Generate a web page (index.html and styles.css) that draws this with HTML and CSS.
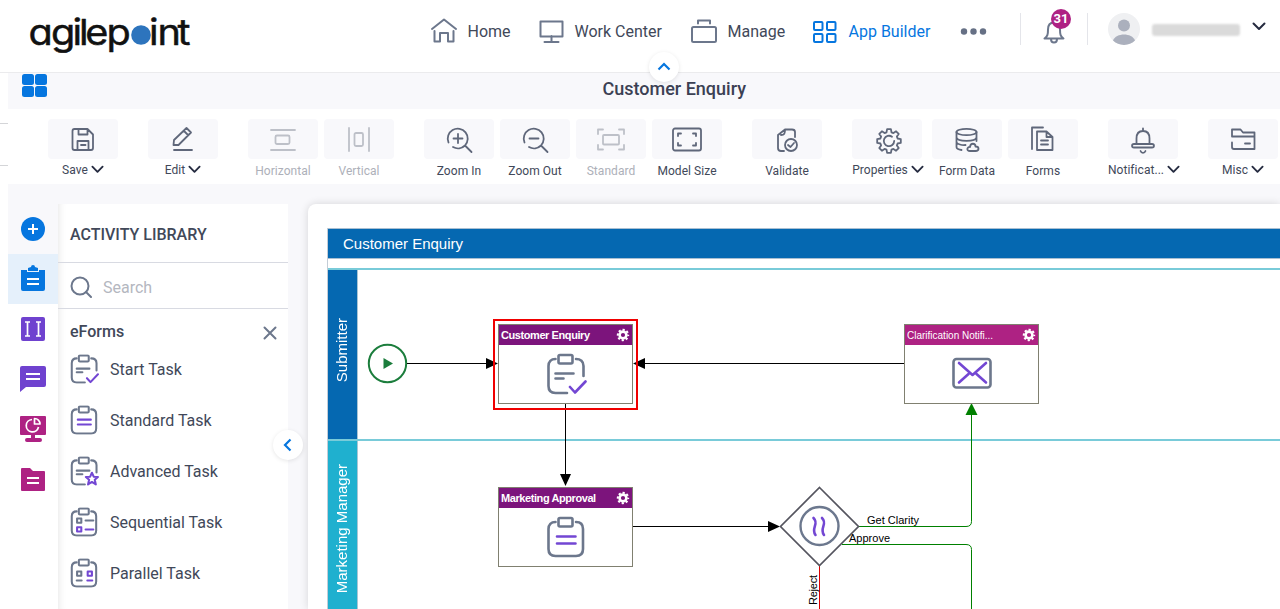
FILE: index.html
```html
<!DOCTYPE html>
<html lang="en">
<head>
  <meta charset="UTF-8" />
  <meta name="viewport" content="width=device-width, initial-scale=1.0" />
  <title>Customer Enquiry - App Builder</title>
  <link rel="stylesheet" href="styles.css">
</head>
<body>
  <svg class="defs">
    <symbol id="chevron" viewBox="0 0 14 9"><path d="M1.5 1.5L7 7l5.5-5.5"/></symbol>
    <symbol id="clip" viewBox="0 0 41 42">
      <rect x="12.500" y="2" width="14" height="8.500" rx="1.500"/>
      <path d="M9.500 6C5 6 2.500 8.500 2.500 13v20c0 4.500 2.500 7 7 7h20.500c4.500 0 7-2.500 7-7V13c0-4.500-2.500-7-7-7"/>
    </symbol>
    <symbol id="clip-open" viewBox="0 0 41 42">
      <rect x="12.500" y="2" width="14" height="8.500" rx="1.500"/>
      <path d="M9.500 6C5 6 2.500 8.500 2.500 13v20c0 4.500 2.500 7 7 7H21M30 6c4.500 0 7.500 2.500 7.500 7v10M9.500 20.500h18M9.500 25.500h8"/>
    </symbol>
    <symbol id="task-start" viewBox="0 0 41 42">
      <use href="#clip-open" width="41" height="42"/>
      <path class="accent" d="M24 34l5 5.500 10.500-11"/>
    </symbol>
    <symbol id="task-standard" viewBox="0 0 41 42">
      <use href="#clip" width="41" height="42"/>
      <path class="accent" d="M11 20.500h18.500M11 27.500h18.500"/>
    </symbol>
    <symbol id="cog" viewBox="0 0 14 14">
      <circle cx="7" cy="7" r="3.400" stroke-width="2.600"/>
      <circle cx="7" cy="7" r="5.200" stroke-width="2" stroke-dasharray="2.200 1.884" stroke-dashoffset="1.100"/>
    </symbol>
  </svg>

  <header class="header">
    <svg class="logo" viewBox="0 0 164 48">
      <g transform="scale(1.1 1)">
        <text y="34" x="0.500 21 40.500 46.400 52 71.400">agilep</text>
        <text y="34" x="110 117.700 135.800">int</text>
      </g>
      <circle cx="113" cy="24" r="9.800"/>
    </svg>
    <nav class="nav">
      <a class="nav-item"><svg width="26" height="26"><path d="M1 12L13 2.500 25 12M3.500 14v10.500H9V16h8v8.500h5.500V14"/></svg>Home</a>
      <a class="nav-item"><svg width="25" height="26"><path d="M1.500 4.500h22v15h-22zM12.500 19v5.500M5.500 25h14"/></svg>Work Center</a>
      <a class="nav-item"><svg width="26" height="26"><rect x="1" y="10" width="24" height="15" rx="1.500"/><path d="M7 6.500V3.500h12v3"/></svg>Manage</a>
      <a class="nav-item active"><svg width="25" height="26"><rect x="1" y="5" width="8.500" height="8" rx="1"/><rect x="14" y="5" width="8.500" height="8" rx="1"/><rect x="1" y="17" width="8.500" height="8" rx="1"/><rect x="14" y="17" width="8.500" height="8" rx="1"/></svg>App Builder</a>
      <svg class="dots" width="28" height="26"><circle cx="4" cy="13.500" r="3.200"/><circle cx="13.500" cy="13.500" r="3.200"/><circle cx="23" cy="13.500" r="3.200"/></svg>
    </nav>
    <div class="bell">
      <svg width="22" height="26"><path d="M1.500 19.500c3-2 3.500-4 3.500-9 0-4 2-7 6-7s6 3 6 7c0 5 .5 7 3.500 9zM8 20c0 2 1.200 3.500 3 3.500s3-1.500 3-3.500"/></svg>
      <span class="badge">31</span>
    </div>
    <div class="user">
      <svg class="avatar" width="32" height="32"><circle cx="16" cy="16" r="16" fill="#eff0f2"/><circle cx="16" cy="12.500" r="6" fill="#abb0bd"/><path d="M5 27.500c3-8 19-8 22 0A16 16 0 0 1 5 27.500z" fill="#abb0bd"/></svg>
      <span class="user-name"></span>
      <svg class="chevron"><use href="#chevron"/></svg>
    </div>
    <span class="collapse"><svg width="14" height="9"><path d="M1.500 7.500L7 2l5.500 5.500"/></svg></span>
  </header>

  <div class="app">
    <div class="title-bar">
      <div class="app-menu"><i></i><i></i><i></i><i></i></div>
      <h1>Customer Enquiry</h1>
    </div>

    <div class="toolbar">
      <div class="group">
        <div class="tool"><div class="tile"><svg><path d="M6.500 4h13L25 9.500V23c0 1.500-.5 2-2 2H6.500c-1.500 0-2-.5-2-2V6c0-1.500.5-2 2-2zM10.500 4v5.500h9V4M9.500 25v-9h11v9M13 20h4.500"/></svg></div><span class="drop">Save <svg class="chevron"><use href="#chevron"/></svg></span></div>
      </div>
      <div class="group">
        <div class="tool"><div class="tile"><svg><path d="M5.500 20l.5-5L18.500 3l4.500 4.500L10.500 20zM16 6l4 4M6 25h18"/></svg></div><span class="drop">Edit <svg class="chevron"><use href="#chevron"/></svg></span></div>
      </div>
      <div class="group">
        <div class="tool off"><div class="tile"><svg><path d="M3 5h24M3 25h24"/><rect x="7.500" y="10.500" width="14" height="8.500" rx="1.500"/></svg></div><span>Horizontal</span></div>
        <div class="tool off"><div class="tile"><svg><path d="M5 3v23M25 3v23"/><rect x="10.500" y="8" width="8.500" height="13" rx="1.500"/></svg></div><span>Vertical</span></div>
      </div>
      <div class="group">
        <div class="tool"><div class="tile"><svg><path d="M4.500 17.500A10 10 0 1 1 21 20.500L27.500 27M21 20.500A10 10 0 0 1 9 22M14 9v9M9.500 13.500h9"/></svg></div><span>Zoom In</span></div>
        <div class="tool"><div class="tile"><svg><path d="M4.500 17.500A10 10 0 1 1 21 20.500L27.500 27M21 20.500A10 10 0 0 1 9 22M9.500 13.500h9"/></svg></div><span>Zoom Out</span></div>
        <div class="tool off"><div class="tile"><svg><path d="M2 9V4.500h5M23 4.500h5V9M28 20v4.500h-5M7 24.500H2V20"/><rect x="7" y="10" width="16" height="9.500" rx="1"/></svg></div><span>Standard</span></div>
        <div class="tool"><div class="tile"><svg><rect x="1" y="3.500" width="28" height="22" rx="2"/><path d="M6 11V8.500h3M21 8.500h3V11M24 18v2.500h-3M9 20.500H6V18"/></svg></div><span>Model Size</span></div>
      </div>
      <div class="group">
        <div class="tool"><div class="tile"><svg><path d="M23 12V7c0-2-1-2.500-3-2.500h-7L6 10v13c0 2 1 3 3 3h3M13 4.500c0 4-.5 5.500-4 5.500"/><circle cx="19" cy="20" r="6"/><path d="M16 20l2.500 2 3.500-4"/></svg></div><span>Validate</span></div>
      </div>
      <div class="group data">
        <div class="tool"><div class="tile"><svg class="gear"><path d="M13.100 3.200L16.900 3.200 17.500 6.400 19.400 7.100 22.100 5.300 24.700 7.900 22.900 10.600 23.600 12.500 26.800 13.100 26.800 16.900 23.600 17.500 22.900 19.400 24.700 22.100 22.100 24.700 19.400 22.900 17.500 23.600 16.900 26.800 13.100 26.800 12.500 23.600 10.600 22.900 7.900 24.700 5.300 22.100 7.100 19.400 6.400 17.500 3.200 16.900 3.200 13.100 6.400 12.500 7.100 10.600 5.300 7.900 7.900 5.300 10.600 7.100 12.500 6.400z"/><path d="M18 10.700a5.200 5.200 0 1 0 2.200 4.300"/></svg></div><span class="drop">Properties <svg class="chevron"><use href="#chevron"/></svg></span></div>
        <div class="tool"><div class="tile"><svg><ellipse cx="14.500" cy="7" rx="10" ry="3.200"/><path d="M4.500 7v15c0 1.500 1.500 2.500 5 3M24.500 7v9M4.500 12.500c1 4.500 19 4.500 20 0M4.500 17.500c1 1.500 5 3 9 2.500M18 26c-4 0-3-4.500 0-4 .5-4.500 5.500-4 5.500-.5 4 0 4 4.500 0 4.500z"/></svg></div><span>Form Data</span></div>
        <div class="tool"><div class="tile"><svg><path d="M4 24V2.500h11M9 6.500h9.500l6 5.500v13H9zM18.500 6.500V12h6M13 15.500h7M13 19.500h7"/></svg></div><span>Forms</span></div>
      </div>
      <div class="group">
        <div class="tool"><div class="tile"><svg><path d="M15 3.500V6M8.500 19v-5.500c0-5 2.500-7.500 6.500-7.500s6.500 2.500 6.500 7.500V19M6 19h18c2.600 0 2.600 3.500 0 3.500H6c-2.600 0-2.600-3.500 0-3.500zM12.500 26c1 2.500 4 2.500 5 0"/></svg></div><span class="drop wide">Notificat... <svg class="chevron"><use href="#chevron"/></svg></span></div>
      </div>
      <div class="group">
        <div class="tool"><div class="tile"><svg><path d="M4 11.500V4.500h8.500l2.500 3h11.500v4M4 11.500h22.500V24H6c-1.500 0-2-.5-2-2v-4.500M17 18.500h5"/></svg></div><span class="drop">Misc <svg class="chevron"><use href="#chevron"/></svg></span></div>
      </div>
    </div>

    <div class="workspace">
      <div class="rail">
        <div class="rail-item"><svg><circle cx="15" cy="15" r="12" fill="#0676df"/><path class="w" d="M15 10v10M10 15h10"/></svg></div>
        <div class="rail-item selected"><svg><path fill="#0676df" d="M3 6h6v2h12V6h6v19a2 2 0 0 1-2 2H5a2 2 0 0 1-2-2zM10 7V4l3-1a2 2 0 0 1 4 0l3 1v3z"/><path class="w" d="M9 15h12M9 20h12"/></svg></div>
        <div class="rail-item"><svg><rect x="3" y="3" width="24" height="24" rx="2" fill="#6f42cf"/><path class="w thin" d="M9.500 8v14M20.500 8v14M7 8h5M18 8h5M7 22h5M18 22h5"/></svg></div>
        <div class="rail-item"><svg><path fill="#6f42cf" d="M4 2h22a2 2 0 0 1 2 2v17a2 2 0 0 1-2 2H8l-6 5V4a2 2 0 0 1 2-2z"/><path class="w" d="M8 10h14M8 15h14"/></svg></div>
        <div class="rail-item"><svg><path fill="#ae2283" d="M3 2h24a1 1 0 0 1 1 1v17a1 1 0 0 1-1 1H17v3h5a2 2 0 0 1 0 4H9a2 2 0 0 1 0-4h4v-3H3a1 1 0 0 1-1-1V3a1 1 0 0 1 1-1z"/><path class="w thin" d="M14 5.500a6.200 6.200 0 1 0 6.500 7.500M16.500 4.500V10H22a5.500 5.500 0 0 0-5.500-5.500z"/></svg></div>
        <div class="rail-item"><svg><path fill="#ae2283" d="M3 5a1 1 0 0 1 1-1h8l3 3h11a1 1 0 0 1 1 1v18a1 1 0 0 1-1 1H4a1 1 0 0 1-1-1z"/><path class="w" d="M9 14h12M9 19h12"/></svg></div>
      </div>

      <div class="library">
        <h2>ACTIVITY LIBRARY</h2>
        <div class="search"><svg width="22" height="22"><circle cx="10" cy="10" r="8.500"/><path d="M16 16l5 5"/></svg>Search</div>
        <div class="section">eForms <svg width="14" height="14"><path d="M1.500 1.500l11 11M12.500 1.500l-11 11"/></svg></div>
        <ul>
          <li><svg viewBox="0 0 41 42"><use href="#task-start"/></svg>Start Task</li>
          <li><svg viewBox="0 0 41 42"><use href="#task-standard"/></svg>Standard Task</li>
          <li><svg viewBox="0 0 41 42"><use href="#clip-open"/><path class="accent" d="M31 23.500l2.500 5.500 6 .5-4.500 4 1.500 6.500-5.500-3.500-5.500 3.500 1.500-6.500-4.500-4 6-.5z"/></svg>Advanced Task</li>
          <li><svg viewBox="0 0 41 42"><use href="#clip"/><path d="M10 16h6v6h-6zM22 19h11"/><path class="accent" d="M10 28.500h6v6h-6zM22 31.500h11"/></svg>Sequential Task</li>
          <li><svg viewBox="0 0 41 42"><use href="#clip"/><path d="M10 19h6v6h-6zM9.500 31.500h7"/><path class="accent" d="M25 19h6v6h-6zM24.500 31.500h7"/></svg>Parallel Task</li>
        </ul>
        <span class="collapse side"><svg width="9" height="14"><path d="M7.500 1.500L2 7l5.500 5.500"/></svg></span>
      </div>

      <div class="canvas">
        <div class="pool">
          <div class="pool-title">Customer Enquiry</div>
          <div class="lane submitter"><div class="lane-name"><span>Submitter</span></div></div>
          <div class="lane manager"><div class="lane-name"><span>Marketing Manager</span></div></div>
        </div>

        <svg class="edges" width="972" height="405">
          <circle cx="79.500" cy="159.500" r="18.700" fill="#fff" stroke="#1b7d3c" stroke-width="2"/>
          <path d="M75.500 154v11l9.500-5.500z" fill="#1b7d3c"/>
          <g stroke="#000" fill="none">
            <path d="M99 159.500h80M337 159.500h259M257.500 200v72M325 322.500h136"/>
          </g>
          <path d="M178 154v11l12-5.500zM337 154v11l-12-5.500zM252 270h11l-5.500 12zM460 317v11l12-5.500z"/>
          <g stroke="green" fill="none">
            <path d="M550 322.500h108q5.500 0 5.500-5V210M534 340.500h124q5.500 0 5.500 5V405"/>
          </g>
          <path d="M657.500 211h12l-6-12z" fill="green"/>
          <path d="M511.500 361v44" stroke="#dc0000"/>
          <path d="M511.500 283.500l39 39-39 39-39-39z" fill="#fff" stroke="#55555f" stroke-width="1.700"/>
          <circle cx="511.500" cy="322" r="19" fill="none" stroke="#6c788e" stroke-width="2.400"/>
          <path d="M505.500 314c6 6-3 10 2 17M514 314c6 6-3 10 2 17" fill="none" stroke="#7347d3" stroke-width="2.600" stroke-linecap="round"/>
          <text x="559" y="320" textLength="52">Get Clarity</text>
          <text x="541" y="338" textLength="41">Approve</text>
          <text transform="translate(509 401) rotate(-90)" textLength="30">Reject</text>
        </svg>

        <div class="highlight"></div>
        <div class="node enquiry">
          <div class="node-title">Customer Enquiry <svg><use href="#cog"/></svg></div>
          <svg class="node-icon"><use href="#task-start"/></svg>
        </div>
        <div class="node approval">
          <div class="node-title">Marketing Approval <svg><use href="#cog"/></svg></div>
          <svg class="node-icon"><use href="#task-standard"/></svg>
        </div>
        <div class="node clarification">
          <div class="node-title">Clarification Notifi... <svg><use href="#cog"/></svg></div>
          <svg class="node-icon"><rect x="1.500" y="6" width="37" height="28.500" rx="3"/><path class="accent" d="M7 10l13.500 12L34 10M7 29.500l9.500-8.500M34 29.500l-9.500-8.500"/></svg>
        </div>
      </div>
    </div>
  </div>
</body>
</html>
```
FILE: styles.css
```css
* {
  box-sizing: border-box;
}
body {
  margin: 0;
  height: 609px;
  overflow: hidden;
  font-family: Roboto, "Liberation Sans", sans-serif;
  font-size: 16px;
  color: #414859;
  background: #fff;
}
svg {
  fill: none;
  stroke: #6c778c;
  stroke-width: 2;
  stroke-linecap: round;
  stroke-linejoin: round;
  flex: none;
}
.defs {
  position: absolute;
  width: 0;
  height: 0;
}
.accent {
  stroke: #7347d3;
}

/* header */
.header {
  position: relative;
  display: flex;
  align-items: flex-start;
  height: 73px;
  border-bottom: 1px solid #ebebed;
}
.logo {
  width: 164px;
  height: 48px;
  margin: 11px 0 0 28px;
  stroke: none;
}
.logo text {
  font-family: Inter, sans-serif;
  font-size: 36px;
  font-feature-settings: "cv11";
  fill: #111;
  stroke: #111;
  stroke-width: 0.5;
}
.logo circle {
  fill: #2d74bd;
}
.nav {
  display: grid;
  grid-template-columns: 108px 152px 122px 147px 29px;
  margin: 16px 0 0 239px;
}
.nav-item {
  display: flex;
  align-items: center;
  gap: 10.5px;
  height: 31px;
}
.nav-item svg {
  margin-top: -4px;
}
.nav-item.active {
  color: #0676df;
}
.nav-item.active svg {
  stroke: #0676df;
}
.dots {
  margin-top: 2px;
  fill: #667085;
  stroke: none;
}
.bell {
  position: relative;
  height: 32px;
  width: 68px;
  margin: 13px 0 0 31px;
  padding: 6px 0 0 22px;
  border-left: 1px solid #e4e5ea;
  border-right: 1px solid #e4e5ea;
}
.badge {
  position: absolute;
  left: 30px;
  top: -4px;
  width: 20px;
  height: 20px;
  border-radius: 50%;
  background: #ae2283;
  color: #fff;
  font-size: 13px;
  font-weight: 700;
  line-height: 19px;
  text-align: center;
}
.user {
  display: flex;
  margin: 13px 0 0 20px;
}
.avatar {
  stroke: none;
}
.user-name {
  width: 88px;
  height: 12px;
  margin: 11px 12px 0 12px;
  background: #dadada;
  border-radius: 3px;
  filter: blur(1px);
}
.chevron {
  width: 14px;
  height: 9px;
  stroke: #252b40;
}
.user .chevron {
  margin: 9px 0 0;
}
.collapse {
  position: absolute;
  left: 649px;
  top: 52px;
  width: 30px;
  height: 30px;
  border-radius: 50%;
  background: #fff;
  box-shadow: 0 1px 4px rgba(0, 0, 0, 0.1);
  display: flex;
  align-items: center;
  justify-content: center;
  z-index: 2;
}
.collapse svg {
  margin-top: -2px;
  stroke: #0676df;
  stroke-width: 2.2;
  stroke-linecap: butt;
  stroke-linejoin: miter;
}

.app {
  position: relative;
  margin-left: 8px;
}
/* edges of the tab behind the page */
.app::before {
  content: "";
  position: absolute;
  left: -8px;
  top: 50px;
  width: 8px;
  height: 41px;
  border: solid #d4d5d8;
  border-width: 1px 0;
}
.title-bar {
  display: flex;
  height: 36px;
  background: #f8f8fb;
}
.app-menu {
  display: grid;
  grid-template: 10.5px 10.5px / 11.5px 11.5px;
  gap: 1.5px;
  margin: 1px 0 0 14px;
}
.app-menu i {
  background: #0676df;
  border-radius: 2.5px;
}
.title-bar h1 {
  margin: 5px 0 0 556px;
  font-size: 18px;
  font-weight: 500;
  line-height: 22px;
  color: #3b4053;
}

/* toolbar */
.toolbar {
  display: flex;
  gap: 30px;
  height: 75px;
  padding: 10px 0 0 40px;
  background: #fff;
  overflow: hidden;
}
.group {
  display: flex;
  flex: none;
  gap: 6px;
}
.group.data .tool:first-child {
  margin-right: 4px;
}
.tool {
  display: flex;
  flex-direction: column;
  align-items: center;
  width: 70px;
  font-size: 12px;
  white-space: nowrap;
}
.tile {
  display: flex;
  align-items: center;
  justify-content: center;
  width: 70px;
  height: 40px;
  margin-bottom: 4px;
  background: #f8f8fb;
  border-radius: 4px;
}
.tile svg {
  width: 30px;
  height: 30px;
  margin-top: 2px;
  stroke: #5f677a;
  stroke-width: 1.8;
}
.tile .gear {
  margin: 4px 0 0 3px;
}
.tool span {
  line-height: 16px;
  letter-spacing: 0.05px;
}
.tool .drop {
  line-height: 14px;
}
.tool .wide {
  margin-left: 2px;
}
.drop .chevron {
  width: 13px;
}
.off {
  color: #adb0b9;
}
.off .tile svg {
  stroke: #bdc0c8;
}
.group.data .drop {
  margin-left: 2px;
}

/* workspace */
.workspace {
  display: flex;
  height: 425px;
  background: #f8f8fb;
}
.rail {
  width: 50px;
  padding-top: 20px;
  background: linear-gradient(#f8f8fb 70px, #fff 70px);
}
.rail-item {
  display: flex;
  align-items: center;
  justify-content: center;
  height: 50px;
}
.rail-item.selected {
  background: #e5f0fb;
}
.rail-item svg {
  width: 30px;
  height: 30px;
  stroke: none;
}
.rail-item .w {
  stroke: #fff;
  stroke-width: 2;
  stroke-linecap: butt;
}
.rail-item .thin {
  stroke-width: 1.7;
}
.library {
  position: relative;
  width: 230px;
  margin-top: 20px;
  background: #fff;
  box-shadow: inset 8px 0 8px -8px rgba(0, 0, 0, 0.12);
}
.library h2 {
  height: 59px;
  margin: 0;
  padding: 2px 12px 0;
  border-bottom: 1px solid #d8dae2;
  font-size: 16px;
  font-weight: 500;
  line-height: 57px;
}
.search {
  display: flex;
  align-items: center;
  gap: 11px;
  height: 46px;
  padding: 3px 12px 0;
  border-bottom: 1px solid #d8dae2;
  color: #b4b7bf;
}
.section {
  display: flex;
  align-items: center;
  justify-content: space-between;
  height: 45px;
  padding: 0 11px 0 12px;
  font-weight: 500;
}
.section svg {
  margin-top: 3px;
}
.library ul {
  margin: -10px 0 0;
  padding: 0;
  list-style: none;
}
.library li {
  display: flex;
  align-items: center;
  gap: 11px;
  height: 51px;
  padding-left: 12px;
}
.library li svg {
  width: 29px;
  height: 30px;
  margin-top: -2px;
  stroke-width: 2.9;
}
.collapse.side {
  left: 215px;
  top: 226px;
}
.side svg {
  margin: 0 1px 0 0;
}

/* process model */
.canvas {
  position: relative;
  flex: 1;
  margin: 20px 0 0 20px;
  padding: 24px 0 0 19px;
  background: #fff;
  border-radius: 8px 0 0 0;
  box-shadow: 0 0 8px rgba(0, 0, 0, 0.14);
  font-family: "Liberation Sans", Arial, sans-serif;
}
.pool {
  border-left: 1px solid #c3ccd6;
}
.pool-title {
  height: 31px;
  padding-left: 15px;
  border-top: 1px solid #a9bfd2;
  border-bottom: 1px solid #a9bfd2;
  margin-bottom: 9px;
  background: #0568b1;
  color: #fff;
  font-size: 15px;
  line-height: 30px;
}
.lane {
  height: 171px;
  border-top: 2px solid #79cbd9;
}
.lane-name {
  display: flex;
  align-items: center;
  justify-content: center;
  width: 30px;
  height: 100%;
  border-right: 1px solid #a9c5d4;
  color: #fff;
  font-size: 15px;
}
.lane-name span {
  writing-mode: vertical-rl;
  transform: rotate(180deg);
  white-space: nowrap;
}
.submitter .lane-name {
  padding: 0 3px 8px 0;
  background: #0568b1;
}
.manager .lane-name {
  padding: 6px 2px 0 0;
  background: #1fb0cf;
}
.edges {
  position: absolute;
  left: 0;
  top: 0;
  fill: #000;
  stroke: none;
  stroke-width: 1;
  stroke-linecap: butt;
  stroke-linejoin: miter;
  font-size: 11px;
}
.highlight {
  position: absolute;
  left: 185px;
  top: 115px;
  width: 145px;
  height: 91px;
  border: 2px solid #f00000;
}
.node {
  position: absolute;
  width: 135px;
  height: 80px;
  border: 1px solid #808070;
  background: #fff;
}
.enquiry {
  left: 190px;
  top: 120px;
}
.approval {
  left: 190px;
  top: 283px;
}
.clarification {
  left: 596px;
  top: 120px;
}
.node-title {
  display: flex;
  align-items: center;
  justify-content: space-between;
  height: 20px;
  padding: 0 2px;
  background: #7c147c;
  color: #fff;
  font-size: 11px;
  font-weight: 700;
  letter-spacing: -0.42px;
  white-space: nowrap;
}
.node-title svg {
  width: 14px;
  height: 14px;
  stroke: #fff;
  stroke-linecap: butt;
}
.clarification .node-title {
  background: #ae2283;
  font-size: 10px;
  font-weight: 400;
  letter-spacing: 0;
}
.node-icon {
  display: block;
  width: 41px;
  height: 42px;
  margin: 8px 0 0 47px;
  stroke-width: 2.6;
}
```
